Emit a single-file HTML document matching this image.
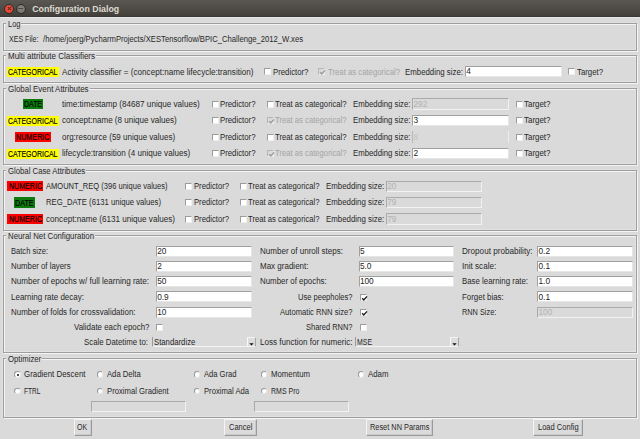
<!DOCTYPE html>
<html><head><meta charset="utf-8"><style>
html,body{margin:0;padding:0;}
body{width:640px;height:439px;overflow:hidden;position:relative;background:#dadada;font-family:"Liberation Sans",sans-serif;}
.t{position:absolute;white-space:nowrap;font-family:"Liberation Sans",sans-serif;}
</style></head><body>
<div style="position:absolute;left:0;top:0;width:640px;height:16px;background:linear-gradient(#5a5751,#4f4d47 50%,#423f3a)"></div>
<div style="position:absolute;left:0;top:16px;width:640px;height:0.6px;background:#3a3834"></div>
<div style="position:absolute;left:0;top:16.6px;width:640px;height:1.5px;background:#e8e8e8"></div>
<div style="position:absolute;left:4.3px;top:3.5px;width:10px;height:10px;box-sizing:border-box;border:0.8px solid #2e2d2a;border-radius:50%;background:radial-gradient(circle at 50% 40%,#f85545,#e23c2a)"></div>
<svg style="position:absolute;left:6.8px;top:6px" width="5" height="5" viewBox="0 0 5 5"><path d="M0.8 0.8 L4.2 4.2 M4.2 0.8 L0.8 4.2" stroke="#6a2a1c" stroke-width="1.1"/></svg>
<div style="position:absolute;left:15.5px;top:3.5px;width:10px;height:10px;box-sizing:border-box;border:0.8px solid #2e2d2a;border-radius:50%;background:radial-gradient(circle at 50% 40%,#878681,#6c6b66)"></div>
<div style="position:absolute;left:18.2px;top:8.1px;width:4.6px;height:1px;background:#4a4945"></div>
<div style="position:absolute;left:2px;top:22px;width:636px;height:30px;box-sizing:border-box;border:1px solid #e0e0e0;border-right-color:transparent;border-bottom-color:transparent"></div>
<div style="position:absolute;left:4px;top:24px;width:632px;height:26px;box-sizing:border-box;border:1px solid transparent;border-right-color:#e2e2e2;border-bottom-color:#e2e2e2"></div>
<div style="position:absolute;left:4px;top:24px;width:634px;height:28px;box-sizing:border-box;border:1px solid #f4f4f4"></div>
<div style="position:absolute;left:3px;top:23px;width:634px;height:28px;box-sizing:border-box;border:1px solid #9e9e9e"></div>
<div style="position:absolute;left:6.3px;top:22px;width:14.9px;height:3px;background:#dadada"></div>
<div style="position:absolute;left:2px;top:54px;width:636px;height:30px;box-sizing:border-box;border:1px solid #e0e0e0;border-right-color:transparent;border-bottom-color:transparent"></div>
<div style="position:absolute;left:4px;top:56px;width:632px;height:26px;box-sizing:border-box;border:1px solid transparent;border-right-color:#e2e2e2;border-bottom-color:#e2e2e2"></div>
<div style="position:absolute;left:4px;top:56px;width:634px;height:28px;box-sizing:border-box;border:1px solid #f4f4f4"></div>
<div style="position:absolute;left:3px;top:55px;width:634px;height:28px;box-sizing:border-box;border:1px solid #9e9e9e"></div>
<div style="position:absolute;left:6.3px;top:54px;width:89.4px;height:3px;background:#dadada"></div>
<div style="position:absolute;left:2px;top:87px;width:636px;height:79px;box-sizing:border-box;border:1px solid #e0e0e0;border-right-color:transparent;border-bottom-color:transparent"></div>
<div style="position:absolute;left:4px;top:89px;width:632px;height:75px;box-sizing:border-box;border:1px solid transparent;border-right-color:#e2e2e2;border-bottom-color:#e2e2e2"></div>
<div style="position:absolute;left:4px;top:89px;width:634px;height:77px;box-sizing:border-box;border:1px solid #f4f4f4"></div>
<div style="position:absolute;left:3px;top:88px;width:634px;height:77px;box-sizing:border-box;border:1px solid #9e9e9e"></div>
<div style="position:absolute;left:6.3px;top:87px;width:83.4px;height:3px;background:#dadada"></div>
<div style="position:absolute;left:2px;top:169px;width:636px;height:63px;box-sizing:border-box;border:1px solid #e0e0e0;border-right-color:transparent;border-bottom-color:transparent"></div>
<div style="position:absolute;left:4px;top:171px;width:632px;height:59px;box-sizing:border-box;border:1px solid transparent;border-right-color:#e2e2e2;border-bottom-color:#e2e2e2"></div>
<div style="position:absolute;left:4px;top:171px;width:634px;height:61px;box-sizing:border-box;border:1px solid #f4f4f4"></div>
<div style="position:absolute;left:3px;top:170px;width:634px;height:61px;box-sizing:border-box;border:1px solid #9e9e9e"></div>
<div style="position:absolute;left:6.3px;top:169px;width:79.9px;height:3px;background:#dadada"></div>
<div style="position:absolute;left:2px;top:234px;width:636px;height:120px;box-sizing:border-box;border:1px solid #e0e0e0;border-right-color:transparent;border-bottom-color:transparent"></div>
<div style="position:absolute;left:4px;top:236px;width:632px;height:116px;box-sizing:border-box;border:1px solid transparent;border-right-color:#e2e2e2;border-bottom-color:#e2e2e2"></div>
<div style="position:absolute;left:4px;top:236px;width:634px;height:118px;box-sizing:border-box;border:1px solid #f4f4f4"></div>
<div style="position:absolute;left:3px;top:235px;width:634px;height:118px;box-sizing:border-box;border:1px solid #9e9e9e"></div>
<div style="position:absolute;left:6.3px;top:234px;width:88.4px;height:3px;background:#dadada"></div>
<div style="position:absolute;left:2px;top:357px;width:636px;height:62px;box-sizing:border-box;border:1px solid #e0e0e0;border-right-color:transparent;border-bottom-color:transparent"></div>
<div style="position:absolute;left:4px;top:359px;width:632px;height:58px;box-sizing:border-box;border:1px solid transparent;border-right-color:#e2e2e2;border-bottom-color:#e2e2e2"></div>
<div style="position:absolute;left:4px;top:359px;width:634px;height:60px;box-sizing:border-box;border:1px solid #f4f4f4"></div>
<div style="position:absolute;left:3px;top:358px;width:634px;height:60px;box-sizing:border-box;border:1px solid #9e9e9e"></div>
<div style="position:absolute;left:6.3px;top:357px;width:35.6px;height:3px;background:#dadada"></div>
<div style="position:absolute;left:7px;top:66.5px;width:52px;height:10.5px;background:#ffff00"></div>
<div style="position:absolute;left:264.1px;top:68.4px;width:7px;height:7px;box-sizing:border-box;background:#ffffff;border:1px solid #9c9c9c;border-right-color:#efefef;border-bottom-color:#efefef"></div>
<div style="position:absolute;left:317.6px;top:68.4px;width:7px;height:7px;box-sizing:border-box;background:#dadada;border:1px solid #b6b6b6;border-right-color:#efefef;border-bottom-color:#efefef"><svg width="7" height="7" style="position:absolute;left:0;top:0" viewBox="0 0 7 7"><path d="M1.2 3.2 L2.8 5.0 L6.0 1.4" stroke="#9a9a9a" stroke-width="1.35" fill="none"/></svg></div>
<div style="position:absolute;left:465px;top:66px;width:96.5px;height:11px;box-sizing:border-box;background:#fff;border:1px solid #a0a0a0;border-right-color:#e6e6e6;border-bottom-color:#e6e6e6"></div>
<div style="position:absolute;left:568.4px;top:68.4px;width:7px;height:7px;box-sizing:border-box;background:#ffffff;border:1px solid #9c9c9c;border-right-color:#efefef;border-bottom-color:#efefef"></div>
<div style="position:absolute;left:22.5px;top:99.0px;width:20.5px;height:10.200000000000003px;background:#0d7a0d"></div>
<div style="position:absolute;left:212.1px;top:100.80000000000001px;width:7px;height:7px;box-sizing:border-box;background:#ffffff;border:1px solid #9c9c9c;border-right-color:#efefef;border-bottom-color:#efefef"></div>
<div style="position:absolute;left:266.6px;top:100.80000000000001px;width:7px;height:7px;box-sizing:border-box;background:#ffffff;border:1px solid #9c9c9c;border-right-color:#efefef;border-bottom-color:#efefef"></div>
<div style="position:absolute;left:412.3px;top:98.4px;width:96.5px;height:11.2px;box-sizing:border-box;background:#dadada;border:1px solid #aaaaaa;border-right-color:#f2f2f2;border-bottom-color:#f2f2f2"></div>
<div style="position:absolute;left:515.9px;top:100.80000000000001px;width:7px;height:7px;box-sizing:border-box;background:#ffffff;border:1px solid #9c9c9c;border-right-color:#efefef;border-bottom-color:#efefef"></div>
<div style="position:absolute;left:7px;top:115.5px;width:52px;height:10.200000000000003px;background:#ffff00"></div>
<div style="position:absolute;left:212.1px;top:117.30000000000001px;width:7px;height:7px;box-sizing:border-box;background:#ffffff;border:1px solid #9c9c9c;border-right-color:#efefef;border-bottom-color:#efefef"></div>
<div style="position:absolute;left:266.6px;top:117.30000000000001px;width:7px;height:7px;box-sizing:border-box;background:#dadada;border:1px solid #b6b6b6;border-right-color:#efefef;border-bottom-color:#efefef"><svg width="7" height="7" style="position:absolute;left:0;top:0" viewBox="0 0 7 7"><path d="M1.2 3.2 L2.8 5.0 L6.0 1.4" stroke="#9a9a9a" stroke-width="1.35" fill="none"/></svg></div>
<div style="position:absolute;left:412.3px;top:114.9px;width:96.5px;height:11.2px;box-sizing:border-box;background:#fff;border:1px solid #a0a0a0;border-right-color:#e6e6e6;border-bottom-color:#e6e6e6"></div>
<div style="position:absolute;left:515.9px;top:117.30000000000001px;width:7px;height:7px;box-sizing:border-box;background:#ffffff;border:1px solid #9c9c9c;border-right-color:#efefef;border-bottom-color:#efefef"></div>
<div style="position:absolute;left:15px;top:132.0px;width:36px;height:10.200000000000017px;background:#ff0000"></div>
<div style="position:absolute;left:212.1px;top:133.8px;width:7px;height:7px;box-sizing:border-box;background:#ffffff;border:1px solid #9c9c9c;border-right-color:#efefef;border-bottom-color:#efefef"></div>
<div style="position:absolute;left:266.6px;top:133.8px;width:7px;height:7px;box-sizing:border-box;background:#ffffff;border:1px solid #9c9c9c;border-right-color:#efefef;border-bottom-color:#efefef"></div>
<div style="position:absolute;left:412.3px;top:131.4px;width:96.5px;height:11.2px;box-sizing:border-box;background:#dadada;border-left:1px solid #b8b8b8;border-right:1px solid #ececec"></div>
<div style="position:absolute;left:515.9px;top:133.8px;width:7px;height:7px;box-sizing:border-box;background:#ffffff;border:1px solid #9c9c9c;border-right-color:#efefef;border-bottom-color:#efefef"></div>
<div style="position:absolute;left:7px;top:148.5px;width:52px;height:10.200000000000017px;background:#ffff00"></div>
<div style="position:absolute;left:212.1px;top:150.3px;width:7px;height:7px;box-sizing:border-box;background:#ffffff;border:1px solid #9c9c9c;border-right-color:#efefef;border-bottom-color:#efefef"></div>
<div style="position:absolute;left:266.6px;top:150.3px;width:7px;height:7px;box-sizing:border-box;background:#dadada;border:1px solid #b6b6b6;border-right-color:#efefef;border-bottom-color:#efefef"><svg width="7" height="7" style="position:absolute;left:0;top:0" viewBox="0 0 7 7"><path d="M1.2 3.2 L2.8 5.0 L6.0 1.4" stroke="#9a9a9a" stroke-width="1.35" fill="none"/></svg></div>
<div style="position:absolute;left:412.3px;top:147.9px;width:96.5px;height:11.2px;box-sizing:border-box;background:#fff;border:1px solid #a0a0a0;border-right-color:#e6e6e6;border-bottom-color:#e6e6e6"></div>
<div style="position:absolute;left:515.9px;top:150.3px;width:7px;height:7px;box-sizing:border-box;background:#ffffff;border:1px solid #9c9c9c;border-right-color:#efefef;border-bottom-color:#efefef"></div>
<div style="position:absolute;left:7.25px;top:181.0px;width:35.5px;height:10.200000000000017px;background:#ff0000"></div>
<div style="position:absolute;left:185.4px;top:182.8px;width:7px;height:7px;box-sizing:border-box;background:#ffffff;border:1px solid #9c9c9c;border-right-color:#efefef;border-bottom-color:#efefef"></div>
<div style="position:absolute;left:239.6px;top:182.8px;width:7px;height:7px;box-sizing:border-box;background:#ffffff;border:1px solid #9c9c9c;border-right-color:#efefef;border-bottom-color:#efefef"></div>
<div style="position:absolute;left:386px;top:180.6px;width:96.2px;height:11.3px;box-sizing:border-box;background:#dadada;border:1px solid #aaaaaa;border-right-color:#f2f2f2;border-bottom-color:#f2f2f2"></div>
<div style="position:absolute;left:14px;top:197.4px;width:21px;height:10.200000000000017px;background:#0d7a0d"></div>
<div style="position:absolute;left:185.4px;top:199.20000000000002px;width:7px;height:7px;box-sizing:border-box;background:#ffffff;border:1px solid #9c9c9c;border-right-color:#efefef;border-bottom-color:#efefef"></div>
<div style="position:absolute;left:239.6px;top:199.20000000000002px;width:7px;height:7px;box-sizing:border-box;background:#ffffff;border:1px solid #9c9c9c;border-right-color:#efefef;border-bottom-color:#efefef"></div>
<div style="position:absolute;left:386px;top:197.0px;width:96.2px;height:11.3px;box-sizing:border-box;background:#dadada;border:1px solid #aaaaaa;border-right-color:#f2f2f2;border-bottom-color:#f2f2f2"></div>
<div style="position:absolute;left:7.25px;top:213.79999999999998px;width:35.5px;height:10.200000000000017px;background:#ff0000"></div>
<div style="position:absolute;left:185.4px;top:215.6px;width:7px;height:7px;box-sizing:border-box;background:#ffffff;border:1px solid #9c9c9c;border-right-color:#efefef;border-bottom-color:#efefef"></div>
<div style="position:absolute;left:239.6px;top:215.6px;width:7px;height:7px;box-sizing:border-box;background:#ffffff;border:1px solid #9c9c9c;border-right-color:#efefef;border-bottom-color:#efefef"></div>
<div style="position:absolute;left:386px;top:213.39999999999998px;width:96.2px;height:11.3px;box-sizing:border-box;background:#dadada;border:1px solid #aaaaaa;border-right-color:#f2f2f2;border-bottom-color:#f2f2f2"></div>
<div style="position:absolute;left:156px;top:245.70000000000002px;width:95.8px;height:11px;box-sizing:border-box;background:#fff;border:1px solid #a0a0a0;border-right-color:#e6e6e6;border-bottom-color:#e6e6e6"></div>
<div style="position:absolute;left:156px;top:260.90000000000003px;width:95.8px;height:11px;box-sizing:border-box;background:#fff;border:1px solid #a0a0a0;border-right-color:#e6e6e6;border-bottom-color:#e6e6e6"></div>
<div style="position:absolute;left:156px;top:276.1px;width:95.8px;height:11px;box-sizing:border-box;background:#fff;border:1px solid #a0a0a0;border-right-color:#e6e6e6;border-bottom-color:#e6e6e6"></div>
<div style="position:absolute;left:156px;top:291.3px;width:95.8px;height:11px;box-sizing:border-box;background:#fff;border:1px solid #a0a0a0;border-right-color:#e6e6e6;border-bottom-color:#e6e6e6"></div>
<div style="position:absolute;left:156px;top:306.5px;width:95.8px;height:11px;box-sizing:border-box;background:#fff;border:1px solid #a0a0a0;border-right-color:#e6e6e6;border-bottom-color:#e6e6e6"></div>
<div style="position:absolute;left:155.79999999999998px;top:323.79999999999995px;width:7.5px;height:7.5px;box-sizing:border-box;background:#ffffff;border:1px solid #9c9c9c;border-right-color:#efefef;border-bottom-color:#efefef"></div>
<div style="position:absolute;left:152.3px;top:337.4px;width:103.5px;height:10.0px;box-sizing:border-box;background:#dadada;border-left:1px solid #9a9a9a;border-bottom:1.2px solid #f4f4f4"></div>
<div style="position:absolute;left:247.0px;top:337.4px;width:8.8px;height:10.0px;box-sizing:border-box;background:#dcdcdc;border-left:1px solid #f8f8f8;border-top:1px solid #f4f4f4;border-right:1.6px solid #a6a6a6;border-bottom:1.2px solid #f4f4f4"></div>
<svg style="position:absolute;left:248.8px;top:343.0px" width="5" height="3" viewBox="0 0 5 3"><path d="M0.3 0.2 L4.7 0.2 L2.5 2.6 Z" fill="#111"/></svg>
<div style="position:absolute;left:358.7px;top:245.70000000000002px;width:95.8px;height:11px;box-sizing:border-box;background:#fff;border:1px solid #a0a0a0;border-right-color:#e6e6e6;border-bottom-color:#e6e6e6"></div>
<div style="position:absolute;left:358.7px;top:260.90000000000003px;width:95.8px;height:11px;box-sizing:border-box;background:#fff;border:1px solid #a0a0a0;border-right-color:#e6e6e6;border-bottom-color:#e6e6e6"></div>
<div style="position:absolute;left:358.7px;top:276.1px;width:95.8px;height:11px;box-sizing:border-box;background:#fff;border:1px solid #a0a0a0;border-right-color:#e6e6e6;border-bottom-color:#e6e6e6"></div>
<div style="position:absolute;left:359.6px;top:294.0px;width:7px;height:7px;box-sizing:border-box;background:#ffffff;border:1px solid #9c9c9c;border-right-color:#efefef;border-bottom-color:#efefef"><svg width="7" height="7" style="position:absolute;left:0;top:0" viewBox="0 0 7 7"><path d="M1.2 3.2 L2.8 5.0 L6.0 1.4" stroke="#1a1a1a" stroke-width="1.35" fill="none"/></svg></div>
<div style="position:absolute;left:359.6px;top:309.2px;width:7px;height:7px;box-sizing:border-box;background:#ffffff;border:1px solid #9c9c9c;border-right-color:#efefef;border-bottom-color:#efefef"><svg width="7" height="7" style="position:absolute;left:0;top:0" viewBox="0 0 7 7"><path d="M1.2 3.2 L2.8 5.0 L6.0 1.4" stroke="#1a1a1a" stroke-width="1.35" fill="none"/></svg></div>
<div style="position:absolute;left:359.6px;top:324.2px;width:7px;height:7px;box-sizing:border-box;background:#ffffff;border:1px solid #9c9c9c;border-right-color:#efefef;border-bottom-color:#efefef"></div>
<div style="position:absolute;left:355.2px;top:337.4px;width:103.40000000000003px;height:10.0px;box-sizing:border-box;background:#dadada;border-left:1px solid #9a9a9a;border-bottom:1.2px solid #f4f4f4"></div>
<div style="position:absolute;left:449.8px;top:337.4px;width:8.8px;height:10.0px;box-sizing:border-box;background:#dcdcdc;border-left:1px solid #f8f8f8;border-top:1px solid #f4f4f4;border-right:1.6px solid #a6a6a6;border-bottom:1.2px solid #f4f4f4"></div>
<svg style="position:absolute;left:451.6px;top:343.0px" width="5" height="3" viewBox="0 0 5 3"><path d="M0.3 0.2 L4.7 0.2 L2.5 2.6 Z" fill="#111"/></svg>
<div style="position:absolute;left:537.3px;top:245.70000000000002px;width:96.2px;height:11px;box-sizing:border-box;background:#fff;border:1px solid #a0a0a0;border-right-color:#e6e6e6;border-bottom-color:#e6e6e6"></div>
<div style="position:absolute;left:537.3px;top:260.90000000000003px;width:96.2px;height:11px;box-sizing:border-box;background:#fff;border:1px solid #a0a0a0;border-right-color:#e6e6e6;border-bottom-color:#e6e6e6"></div>
<div style="position:absolute;left:537.3px;top:276.1px;width:96.2px;height:11px;box-sizing:border-box;background:#fff;border:1px solid #a0a0a0;border-right-color:#e6e6e6;border-bottom-color:#e6e6e6"></div>
<div style="position:absolute;left:537.3px;top:291.3px;width:96.2px;height:11px;box-sizing:border-box;background:#fff;border:1px solid #a0a0a0;border-right-color:#e6e6e6;border-bottom-color:#e6e6e6"></div>
<div style="position:absolute;left:537.3px;top:306.5px;width:96.2px;height:11px;box-sizing:border-box;background:#dadada;border:1px solid #aaaaaa;border-right-color:#f2f2f2;border-bottom-color:#f2f2f2"></div>
<div style="position:absolute;left:14.2px;top:371.3px;width:6.6px;height:6.6px;box-sizing:border-box;border-radius:50%;background:#fff;border:0.8px solid #9a9a9a;border-right-color:#e8e8e8;border-bottom-color:#e8e8e8"><div style="position:absolute;left:1.4999999999999998px;top:1.4999999999999998px;width:2.6px;height:2.6px;border-radius:50%;background:#111"></div></div>
<div style="position:absolute;left:96.7px;top:371.3px;width:6.6px;height:6.6px;box-sizing:border-box;border-radius:50%;background:#fff;border:0.8px solid #9a9a9a;border-right-color:#e8e8e8;border-bottom-color:#e8e8e8"></div>
<div style="position:absolute;left:193.7px;top:371.3px;width:6.6px;height:6.6px;box-sizing:border-box;border-radius:50%;background:#fff;border:0.8px solid #9a9a9a;border-right-color:#e8e8e8;border-bottom-color:#e8e8e8"></div>
<div style="position:absolute;left:260.7px;top:371.3px;width:6.6px;height:6.6px;box-sizing:border-box;border-radius:50%;background:#fff;border:0.8px solid #9a9a9a;border-right-color:#e8e8e8;border-bottom-color:#e8e8e8"></div>
<div style="position:absolute;left:357.5px;top:371.3px;width:6.6px;height:6.6px;box-sizing:border-box;border-radius:50%;background:#fff;border:0.8px solid #9a9a9a;border-right-color:#e8e8e8;border-bottom-color:#e8e8e8"></div>
<div style="position:absolute;left:14.2px;top:387.59999999999997px;width:6.6px;height:6.6px;box-sizing:border-box;border-radius:50%;background:#fff;border:0.8px solid #9a9a9a;border-right-color:#e8e8e8;border-bottom-color:#e8e8e8"></div>
<div style="position:absolute;left:96.7px;top:387.59999999999997px;width:6.6px;height:6.6px;box-sizing:border-box;border-radius:50%;background:#fff;border:0.8px solid #9a9a9a;border-right-color:#e8e8e8;border-bottom-color:#e8e8e8"></div>
<div style="position:absolute;left:193.7px;top:387.59999999999997px;width:6.6px;height:6.6px;box-sizing:border-box;border-radius:50%;background:#fff;border:0.8px solid #9a9a9a;border-right-color:#e8e8e8;border-bottom-color:#e8e8e8"></div>
<div style="position:absolute;left:260.7px;top:387.59999999999997px;width:6.6px;height:6.6px;box-sizing:border-box;border-radius:50%;background:#fff;border:0.8px solid #9a9a9a;border-right-color:#e8e8e8;border-bottom-color:#e8e8e8"></div>
<div style="position:absolute;left:90.5px;top:401px;width:95.3px;height:11px;box-sizing:border-box;background:#dadada;border:1px solid #aaaaaa;border-right-color:#f2f2f2;border-bottom-color:#f2f2f2"></div>
<div style="position:absolute;left:254.3px;top:401px;width:95.2px;height:11px;box-sizing:border-box;background:#dadada;border:1px solid #aaaaaa;border-right-color:#f2f2f2;border-bottom-color:#f2f2f2"></div>
<div style="position:absolute;left:73.5px;top:419.2px;width:18.0px;height:17.0px;box-sizing:border-box;background:#dbdbdb;border:1px solid #f4f4f4;border-right:1.3px solid #9a9a9a;border-bottom:1.6px solid #9a9a9a;box-shadow:inset -1px -1px 0 #cacaca"></div>
<div style="position:absolute;left:224.2px;top:419.2px;width:32.60000000000002px;height:17.0px;box-sizing:border-box;background:#dbdbdb;border:1px solid #f4f4f4;border-right:1.3px solid #9a9a9a;border-bottom:1.6px solid #9a9a9a;box-shadow:inset -1px -1px 0 #cacaca"></div>
<div style="position:absolute;left:365.6px;top:419.2px;width:67.5px;height:17.0px;box-sizing:border-box;background:#dbdbdb;border:1px solid #f4f4f4;border-right:1.3px solid #9a9a9a;border-bottom:1.6px solid #9a9a9a;box-shadow:inset -1px -1px 0 #cacaca"></div>
<div style="position:absolute;left:533.1px;top:419.2px;width:49.64999999999998px;height:17.0px;box-sizing:border-box;background:#dbdbdb;border:1px solid #f4f4f4;border-right:1.3px solid #9a9a9a;border-bottom:1.6px solid #9a9a9a;box-shadow:inset -1px -1px 0 #cacaca"></div>
<div class="t" style="left:32.20px;top:3.55px;font-size:8.8px;line-height:11.0px;color:#dfdbd2;-webkit-text-stroke:0px #dfdbd2;font-weight:bold;">Configuration Dialog</div>
<div class="t" style="left:7.50px;top:18.83px;font-size:8.3px;line-height:10.38px;color:#282828;-webkit-text-stroke:0px #282828;transform:scaleX(0.9030);transform-origin:0 0;">Log</div>
<div class="t" style="left:7.50px;top:50.83px;font-size:8.3px;line-height:10.38px;color:#282828;-webkit-text-stroke:0px #282828;transform:scaleX(0.9627);transform-origin:0 0;">Multi attribute Classifiers</div>
<div class="t" style="left:7.50px;top:83.83px;font-size:8.3px;line-height:10.38px;color:#282828;-webkit-text-stroke:0px #282828;transform:scaleX(0.9545);transform-origin:0 0;">Global Event Attributes</div>
<div class="t" style="left:7.50px;top:165.83px;font-size:8.3px;line-height:10.38px;color:#282828;-webkit-text-stroke:0px #282828;transform:scaleX(0.9336);transform-origin:0 0;">Global Case Attributes</div>
<div class="t" style="left:7.50px;top:230.83px;font-size:8.3px;line-height:10.38px;color:#282828;-webkit-text-stroke:0px #282828;transform:scaleX(0.9418);transform-origin:0 0;">Neural Net Configuration</div>
<div class="t" style="left:7.50px;top:353.83px;font-size:8.3px;line-height:10.38px;color:#282828;-webkit-text-stroke:0px #282828;transform:scaleX(0.9353);transform-origin:0 0;">Optimizer</div>
<div class="t" style="left:8.60px;top:34.23px;font-size:8.3px;line-height:10.38px;color:#282828;-webkit-text-stroke:0px #282828;transform:scaleX(0.8502);transform-origin:0 0;">XES File:</div>
<div class="t" style="left:43.00px;top:34.23px;font-size:8.3px;line-height:10.38px;color:#282828;-webkit-text-stroke:0px #282828;transform:scaleX(0.9242);transform-origin:0 0;">/home/joerg/PycharmProjects/XESTensorflow/BPIC_Challenge_2012_W.xes</div>
<div class="t" style="left:8.25px;top:66.93px;font-size:8.3px;line-height:10.38px;color:#000;-webkit-text-stroke:0.15px #000;transform:scaleX(0.8410);transform-origin:0 0;">CATEGORICAL</div>
<div class="t" style="left:62.30px;top:66.53px;font-size:8.3px;line-height:10.38px;color:#282828;-webkit-text-stroke:0px #282828;transform:scaleX(0.9783);transform-origin:0 0;">Activity classifier = (concept:name lifecycle:transition)</div>
<div class="t" style="left:272.50px;top:66.53px;font-size:8.3px;line-height:10.38px;color:#282828;-webkit-text-stroke:0px #282828;transform:scaleX(0.9362);transform-origin:0 0;">Predictor?</div>
<div class="t" style="left:327.50px;top:66.53px;font-size:8.3px;line-height:10.38px;color:#a4a4a4;-webkit-text-stroke:0px #a4a4a4;transform:scaleX(0.9330);transform-origin:0 0;">Treat as categorical?</div>
<div class="t" style="left:405.00px;top:66.53px;font-size:8.3px;line-height:10.38px;color:#282828;-webkit-text-stroke:0px #282828;transform:scaleX(0.9456);transform-origin:0 0;">Embedding size:</div>
<div class="t" style="left:466.20px;top:66.33px;font-size:8.3px;line-height:10.38px;color:#1e1e1e;-webkit-text-stroke:0px #1e1e1e;">4</div>
<div class="t" style="left:577.00px;top:66.53px;font-size:8.3px;line-height:10.38px;color:#282828;-webkit-text-stroke:0px #282828;transform:scaleX(0.9395);transform-origin:0 0;">Target?</div>
<div class="t" style="left:23.75px;top:99.13px;font-size:8.3px;line-height:10.38px;color:#000;-webkit-text-stroke:0.15px #000;transform:scaleX(0.8368);transform-origin:0 0;">DATE</div>
<div class="t" style="left:62.30px;top:98.93px;font-size:8.3px;line-height:10.38px;color:#282828;-webkit-text-stroke:0px #282828;transform:scaleX(0.9790);transform-origin:0 0;">time:timestamp (84687 unique values)</div>
<div class="t" style="left:220.00px;top:98.93px;font-size:8.3px;line-height:10.38px;color:#282828;-webkit-text-stroke:0px #282828;transform:scaleX(0.9388);transform-origin:0 0;">Predictor?</div>
<div class="t" style="left:274.50px;top:98.93px;font-size:8.3px;line-height:10.38px;color:#282828;-webkit-text-stroke:0px #282828;transform:scaleX(0.9266);transform-origin:0 0;">Treat as categorical?</div>
<div class="t" style="left:352.50px;top:98.93px;font-size:8.3px;line-height:10.38px;color:#282828;-webkit-text-stroke:0px #282828;transform:scaleX(0.9374);transform-origin:0 0;">Embedding size:</div>
<div class="t" style="left:413.50px;top:98.73px;font-size:8.3px;line-height:10.38px;color:#b2b2b2;-webkit-text-stroke:0px #b2b2b2;">292</div>
<div class="t" style="left:524.30px;top:98.93px;font-size:8.3px;line-height:10.38px;color:#282828;-webkit-text-stroke:0px #282828;transform:scaleX(0.9576);transform-origin:0 0;">Target?</div>
<div class="t" style="left:8.25px;top:115.63px;font-size:8.3px;line-height:10.38px;color:#000;-webkit-text-stroke:0.15px #000;transform:scaleX(0.8410);transform-origin:0 0;">CATEGORICAL</div>
<div class="t" style="left:62.30px;top:115.43px;font-size:8.3px;line-height:10.38px;color:#282828;-webkit-text-stroke:0px #282828;transform:scaleX(0.9714);transform-origin:0 0;">concept:name (8 unique values)</div>
<div class="t" style="left:220.00px;top:115.43px;font-size:8.3px;line-height:10.38px;color:#282828;-webkit-text-stroke:0px #282828;transform:scaleX(0.9388);transform-origin:0 0;">Predictor?</div>
<div class="t" style="left:274.50px;top:115.43px;font-size:8.3px;line-height:10.38px;color:#a4a4a4;-webkit-text-stroke:0px #a4a4a4;transform:scaleX(0.9266);transform-origin:0 0;">Treat as categorical?</div>
<div class="t" style="left:352.50px;top:115.43px;font-size:8.3px;line-height:10.38px;color:#282828;-webkit-text-stroke:0px #282828;transform:scaleX(0.9374);transform-origin:0 0;">Embedding size:</div>
<div class="t" style="left:413.50px;top:115.23px;font-size:8.3px;line-height:10.38px;color:#1e1e1e;-webkit-text-stroke:0px #1e1e1e;">3</div>
<div class="t" style="left:524.30px;top:115.43px;font-size:8.3px;line-height:10.38px;color:#282828;-webkit-text-stroke:0px #282828;transform:scaleX(0.9576);transform-origin:0 0;">Target?</div>
<div class="t" style="left:16.25px;top:132.13px;font-size:8.3px;line-height:10.38px;color:#000;-webkit-text-stroke:0.15px #000;transform:scaleX(0.8652);transform-origin:0 0;">NUMERIC</div>
<div class="t" style="left:62.30px;top:131.93px;font-size:8.3px;line-height:10.38px;color:#282828;-webkit-text-stroke:0px #282828;transform:scaleX(0.9663);transform-origin:0 0;">org:resource (59 unique values)</div>
<div class="t" style="left:220.00px;top:131.93px;font-size:8.3px;line-height:10.38px;color:#282828;-webkit-text-stroke:0px #282828;transform:scaleX(0.9388);transform-origin:0 0;">Predictor?</div>
<div class="t" style="left:274.50px;top:131.93px;font-size:8.3px;line-height:10.38px;color:#282828;-webkit-text-stroke:0px #282828;transform:scaleX(0.9266);transform-origin:0 0;">Treat as categorical?</div>
<div class="t" style="left:352.50px;top:131.93px;font-size:8.3px;line-height:10.38px;color:#282828;-webkit-text-stroke:0px #282828;transform:scaleX(0.9374);transform-origin:0 0;">Embedding size:</div>
<div class="t" style="left:413.50px;top:131.73px;font-size:8.3px;line-height:10.38px;color:#c2c2c2;-webkit-text-stroke:0px #c2c2c2;">8</div>
<div class="t" style="left:524.30px;top:131.93px;font-size:8.3px;line-height:10.38px;color:#282828;-webkit-text-stroke:0px #282828;transform:scaleX(0.9576);transform-origin:0 0;">Target?</div>
<div class="t" style="left:8.25px;top:148.63px;font-size:8.3px;line-height:10.38px;color:#000;-webkit-text-stroke:0.15px #000;transform:scaleX(0.8410);transform-origin:0 0;">CATEGORICAL</div>
<div class="t" style="left:62.30px;top:148.43px;font-size:8.3px;line-height:10.38px;color:#282828;-webkit-text-stroke:0px #282828;transform:scaleX(0.9754);transform-origin:0 0;">lifecycle:transition (4 unique values)</div>
<div class="t" style="left:220.00px;top:148.43px;font-size:8.3px;line-height:10.38px;color:#282828;-webkit-text-stroke:0px #282828;transform:scaleX(0.9388);transform-origin:0 0;">Predictor?</div>
<div class="t" style="left:274.50px;top:148.43px;font-size:8.3px;line-height:10.38px;color:#a4a4a4;-webkit-text-stroke:0px #a4a4a4;transform:scaleX(0.9266);transform-origin:0 0;">Treat as categorical?</div>
<div class="t" style="left:352.50px;top:148.43px;font-size:8.3px;line-height:10.38px;color:#282828;-webkit-text-stroke:0px #282828;transform:scaleX(0.9374);transform-origin:0 0;">Embedding size:</div>
<div class="t" style="left:413.50px;top:148.23px;font-size:8.3px;line-height:10.38px;color:#1e1e1e;-webkit-text-stroke:0px #1e1e1e;">2</div>
<div class="t" style="left:524.30px;top:148.43px;font-size:8.3px;line-height:10.38px;color:#282828;-webkit-text-stroke:0px #282828;transform:scaleX(0.9576);transform-origin:0 0;">Target?</div>
<div class="t" style="left:8.50px;top:181.13px;font-size:8.3px;line-height:10.38px;color:#000;-webkit-text-stroke:0.15px #000;transform:scaleX(0.8523);transform-origin:0 0;">NUMERIC</div>
<div class="t" style="left:46.00px;top:180.93px;font-size:8.3px;line-height:10.38px;color:#282828;-webkit-text-stroke:0px #282828;transform:scaleX(0.9086);transform-origin:0 0;">AMOUNT_REQ (396 unique values)</div>
<div class="t" style="left:193.80px;top:180.93px;font-size:8.3px;line-height:10.38px;color:#282828;-webkit-text-stroke:0px #282828;transform:scaleX(0.9256);transform-origin:0 0;">Predictor?</div>
<div class="t" style="left:247.50px;top:180.93px;font-size:8.3px;line-height:10.38px;color:#282828;-webkit-text-stroke:0px #282828;transform:scaleX(0.9266);transform-origin:0 0;">Treat as categorical?</div>
<div class="t" style="left:326.30px;top:180.93px;font-size:8.3px;line-height:10.38px;color:#282828;-webkit-text-stroke:0px #282828;transform:scaleX(0.9488);transform-origin:0 0;">Embedding size:</div>
<div class="t" style="left:387.20px;top:180.93px;font-size:8.3px;line-height:10.38px;color:#b2b2b2;-webkit-text-stroke:0px #b2b2b2;">20</div>
<div class="t" style="left:15.25px;top:197.53px;font-size:8.3px;line-height:10.38px;color:#000;-webkit-text-stroke:0.15px #000;transform:scaleX(0.8600);transform-origin:0 0;">DATE</div>
<div class="t" style="left:46.00px;top:197.33px;font-size:8.3px;line-height:10.38px;color:#282828;-webkit-text-stroke:0px #282828;transform:scaleX(0.9282);transform-origin:0 0;">REG_DATE (6131 unique values)</div>
<div class="t" style="left:193.80px;top:197.33px;font-size:8.3px;line-height:10.38px;color:#282828;-webkit-text-stroke:0px #282828;transform:scaleX(0.9256);transform-origin:0 0;">Predictor?</div>
<div class="t" style="left:247.50px;top:197.33px;font-size:8.3px;line-height:10.38px;color:#282828;-webkit-text-stroke:0px #282828;transform:scaleX(0.9266);transform-origin:0 0;">Treat as categorical?</div>
<div class="t" style="left:326.30px;top:197.33px;font-size:8.3px;line-height:10.38px;color:#282828;-webkit-text-stroke:0px #282828;transform:scaleX(0.9488);transform-origin:0 0;">Embedding size:</div>
<div class="t" style="left:387.20px;top:197.33px;font-size:8.3px;line-height:10.38px;color:#b2b2b2;-webkit-text-stroke:0px #b2b2b2;">79</div>
<div class="t" style="left:8.50px;top:213.93px;font-size:8.3px;line-height:10.38px;color:#000;-webkit-text-stroke:0.15px #000;transform:scaleX(0.8523);transform-origin:0 0;">NUMERIC</div>
<div class="t" style="left:46.00px;top:213.73px;font-size:8.3px;line-height:10.38px;color:#282828;-webkit-text-stroke:0px #282828;transform:scaleX(0.9779);transform-origin:0 0;">concept:name (6131 unique values)</div>
<div class="t" style="left:193.80px;top:213.73px;font-size:8.3px;line-height:10.38px;color:#282828;-webkit-text-stroke:0px #282828;transform:scaleX(0.9256);transform-origin:0 0;">Predictor?</div>
<div class="t" style="left:247.50px;top:213.73px;font-size:8.3px;line-height:10.38px;color:#282828;-webkit-text-stroke:0px #282828;transform:scaleX(0.9266);transform-origin:0 0;">Treat as categorical?</div>
<div class="t" style="left:326.30px;top:213.73px;font-size:8.3px;line-height:10.38px;color:#282828;-webkit-text-stroke:0px #282828;transform:scaleX(0.9488);transform-origin:0 0;">Embedding size:</div>
<div class="t" style="left:387.20px;top:213.73px;font-size:8.3px;line-height:10.38px;color:#b2b2b2;-webkit-text-stroke:0px #b2b2b2;">79</div>
<div class="t" style="left:11.00px;top:245.93px;font-size:8.3px;line-height:10.38px;color:#282828;-webkit-text-stroke:0px #282828;transform:scaleX(0.9118);transform-origin:0 0;">Batch size:</div>
<div class="t" style="left:157.20px;top:246.03px;font-size:8.3px;line-height:10.38px;color:#1e1e1e;-webkit-text-stroke:0px #1e1e1e;">20</div>
<div class="t" style="left:11.00px;top:261.13px;font-size:8.3px;line-height:10.38px;color:#282828;-webkit-text-stroke:0px #282828;transform:scaleX(0.9435);transform-origin:0 0;">Number of layers</div>
<div class="t" style="left:157.20px;top:261.23px;font-size:8.3px;line-height:10.38px;color:#1e1e1e;-webkit-text-stroke:0px #1e1e1e;">2</div>
<div class="t" style="left:11.00px;top:276.33px;font-size:8.3px;line-height:10.38px;color:#282828;-webkit-text-stroke:0px #282828;transform:scaleX(0.9716);transform-origin:0 0;">Number of epochs w/ full learning rate:</div>
<div class="t" style="left:157.20px;top:276.43px;font-size:8.3px;line-height:10.38px;color:#1e1e1e;-webkit-text-stroke:0px #1e1e1e;">50</div>
<div class="t" style="left:11.00px;top:291.53px;font-size:8.3px;line-height:10.38px;color:#282828;-webkit-text-stroke:0px #282828;transform:scaleX(0.9650);transform-origin:0 0;">Learning rate decay:</div>
<div class="t" style="left:157.20px;top:291.63px;font-size:8.3px;line-height:10.38px;color:#1e1e1e;-webkit-text-stroke:0px #1e1e1e;">0.9</div>
<div class="t" style="left:11.00px;top:306.73px;font-size:8.3px;line-height:10.38px;color:#282828;-webkit-text-stroke:0px #282828;transform:scaleX(0.9574);transform-origin:0 0;">Number of folds for crossvalidation:</div>
<div class="t" style="left:157.20px;top:306.83px;font-size:8.3px;line-height:10.38px;color:#1e1e1e;-webkit-text-stroke:0px #1e1e1e;">10</div>
<div class="t" style="left:73.80px;top:321.73px;font-size:8.3px;line-height:10.38px;color:#282828;-webkit-text-stroke:0px #282828;transform:scaleX(0.9534);transform-origin:0 0;">Validate each epoch?</div>
<div class="t" style="left:84.30px;top:336.93px;font-size:8.3px;line-height:10.38px;color:#282828;-webkit-text-stroke:0px #282828;transform:scaleX(0.9441);transform-origin:0 0;">Scale Datetime to:</div>
<div class="t" style="left:153.60px;top:336.83px;font-size:8.3px;line-height:10.38px;color:#282828;-webkit-text-stroke:0px #282828;transform:scaleX(0.9327);transform-origin:0 0;">Standardize</div>
<div class="t" style="left:259.50px;top:245.93px;font-size:8.3px;line-height:10.38px;color:#282828;-webkit-text-stroke:0px #282828;transform:scaleX(0.9677);transform-origin:0 0;">Number of unroll steps:</div>
<div class="t" style="left:359.90px;top:246.03px;font-size:8.3px;line-height:10.38px;color:#1e1e1e;-webkit-text-stroke:0px #1e1e1e;">5</div>
<div class="t" style="left:259.50px;top:261.13px;font-size:8.3px;line-height:10.38px;color:#282828;-webkit-text-stroke:0px #282828;transform:scaleX(0.9648);transform-origin:0 0;">Max gradient:</div>
<div class="t" style="left:359.90px;top:261.23px;font-size:8.3px;line-height:10.38px;color:#1e1e1e;-webkit-text-stroke:0px #1e1e1e;">5.0</div>
<div class="t" style="left:259.50px;top:276.33px;font-size:8.3px;line-height:10.38px;color:#282828;-webkit-text-stroke:0px #282828;transform:scaleX(0.9522);transform-origin:0 0;">Number of epochs:</div>
<div class="t" style="left:359.90px;top:276.43px;font-size:8.3px;line-height:10.38px;color:#1e1e1e;-webkit-text-stroke:0px #1e1e1e;">100</div>
<div class="t" style="left:297.50px;top:291.53px;font-size:8.3px;line-height:10.38px;color:#282828;-webkit-text-stroke:0px #282828;transform:scaleX(0.9088);transform-origin:0 0;">Use peepholes?</div>
<div class="t" style="left:279.50px;top:306.73px;font-size:8.3px;line-height:10.38px;color:#282828;-webkit-text-stroke:0px #282828;transform:scaleX(0.9195);transform-origin:0 0;">Automatic RNN size?</div>
<div class="t" style="left:305.50px;top:321.73px;font-size:8.3px;line-height:10.38px;color:#282828;-webkit-text-stroke:0px #282828;transform:scaleX(0.9003);transform-origin:0 0;">Shared RNN?</div>
<div class="t" style="left:259.50px;top:336.93px;font-size:8.3px;line-height:10.38px;color:#282828;-webkit-text-stroke:0px #282828;transform:scaleX(0.9737);transform-origin:0 0;">Loss function for numeric:</div>
<div class="t" style="left:356.50px;top:336.83px;font-size:8.3px;line-height:10.38px;color:#282828;-webkit-text-stroke:0px #282828;transform:scaleX(0.8343);transform-origin:0 0;">MSE</div>
<div class="t" style="left:462.00px;top:245.93px;font-size:8.3px;line-height:10.38px;color:#282828;-webkit-text-stroke:0px #282828;transform:scaleX(0.9799);transform-origin:0 0;">Dropout probability:</div>
<div class="t" style="left:538.50px;top:246.03px;font-size:8.3px;line-height:10.38px;color:#1e1e1e;-webkit-text-stroke:0px #1e1e1e;">0.2</div>
<div class="t" style="left:462.00px;top:261.13px;font-size:8.3px;line-height:10.38px;color:#282828;-webkit-text-stroke:0px #282828;transform:scaleX(0.9773);transform-origin:0 0;">Init scale:</div>
<div class="t" style="left:538.50px;top:261.23px;font-size:8.3px;line-height:10.38px;color:#1e1e1e;-webkit-text-stroke:0px #1e1e1e;">0.1</div>
<div class="t" style="left:462.00px;top:276.33px;font-size:8.3px;line-height:10.38px;color:#282828;-webkit-text-stroke:0px #282828;transform:scaleX(0.9477);transform-origin:0 0;">Base learning rate:</div>
<div class="t" style="left:538.50px;top:276.43px;font-size:8.3px;line-height:10.38px;color:#1e1e1e;-webkit-text-stroke:0px #1e1e1e;">1.0</div>
<div class="t" style="left:462.00px;top:291.53px;font-size:8.3px;line-height:10.38px;color:#282828;-webkit-text-stroke:0px #282828;transform:scaleX(0.9530);transform-origin:0 0;">Forget bias:</div>
<div class="t" style="left:538.50px;top:291.63px;font-size:8.3px;line-height:10.38px;color:#1e1e1e;-webkit-text-stroke:0px #1e1e1e;">0.1</div>
<div class="t" style="left:462.00px;top:306.73px;font-size:8.3px;line-height:10.38px;color:#282828;-webkit-text-stroke:0px #282828;transform:scaleX(0.8844);transform-origin:0 0;">RNN Size:</div>
<div class="t" style="left:538.50px;top:306.83px;font-size:8.3px;line-height:10.38px;color:#b2b2b2;-webkit-text-stroke:0px #b2b2b2;">100</div>
<div class="t" style="left:24.30px;top:369.43px;font-size:8.3px;line-height:10.38px;color:#282828;-webkit-text-stroke:0px #282828;transform:scaleX(0.9525);transform-origin:0 0;">Gradient Descent</div>
<div class="t" style="left:106.80px;top:369.43px;font-size:8.3px;line-height:10.38px;color:#282828;-webkit-text-stroke:0px #282828;transform:scaleX(0.9249);transform-origin:0 0;">Ada Delta</div>
<div class="t" style="left:203.80px;top:369.43px;font-size:8.3px;line-height:10.38px;color:#282828;-webkit-text-stroke:0px #282828;transform:scaleX(0.9152);transform-origin:0 0;">Ada Grad</div>
<div class="t" style="left:270.80px;top:369.43px;font-size:8.3px;line-height:10.38px;color:#282828;-webkit-text-stroke:0px #282828;transform:scaleX(0.9398);transform-origin:0 0;">Momentum</div>
<div class="t" style="left:367.60px;top:369.43px;font-size:8.3px;line-height:10.38px;color:#282828;-webkit-text-stroke:0px #282828;transform:scaleX(0.9458);transform-origin:0 0;">Adam</div>
<div class="t" style="left:24.30px;top:385.73px;font-size:8.3px;line-height:10.38px;color:#282828;-webkit-text-stroke:0px #282828;transform:scaleX(0.7955);transform-origin:0 0;">FTRL</div>
<div class="t" style="left:106.80px;top:385.73px;font-size:8.3px;line-height:10.38px;color:#282828;-webkit-text-stroke:0px #282828;transform:scaleX(0.9277);transform-origin:0 0;">Proximal Gradient</div>
<div class="t" style="left:203.80px;top:385.73px;font-size:8.3px;line-height:10.38px;color:#282828;-webkit-text-stroke:0px #282828;transform:scaleX(0.9222);transform-origin:0 0;">Proximal Ada</div>
<div class="t" style="left:270.80px;top:385.73px;font-size:8.3px;line-height:10.38px;color:#282828;-webkit-text-stroke:0px #282828;transform:scaleX(0.8439);transform-origin:0 0;">RMS Pro</div>
<div class="t" style="left:77.45px;top:422.13px;font-size:8.3px;line-height:10.38px;color:#282828;-webkit-text-stroke:0px #282828;transform:scaleX(0.8425);transform-origin:0 0;">OK</div>
<div class="t" style="left:228.80px;top:422.13px;font-size:8.3px;line-height:10.38px;color:#282828;-webkit-text-stroke:0px #282828;transform:scaleX(0.9060);transform-origin:0 0;">Cancel</div>
<div class="t" style="left:369.65px;top:422.13px;font-size:8.3px;line-height:10.38px;color:#282828;-webkit-text-stroke:0px #282828;transform:scaleX(0.8885);transform-origin:0 0;">Reset NN Params</div>
<div class="t" style="left:537.62px;top:422.13px;font-size:8.3px;line-height:10.38px;color:#282828;-webkit-text-stroke:0px #282828;transform:scaleX(0.9074);transform-origin:0 0;">Load Config</div>
</body></html>
